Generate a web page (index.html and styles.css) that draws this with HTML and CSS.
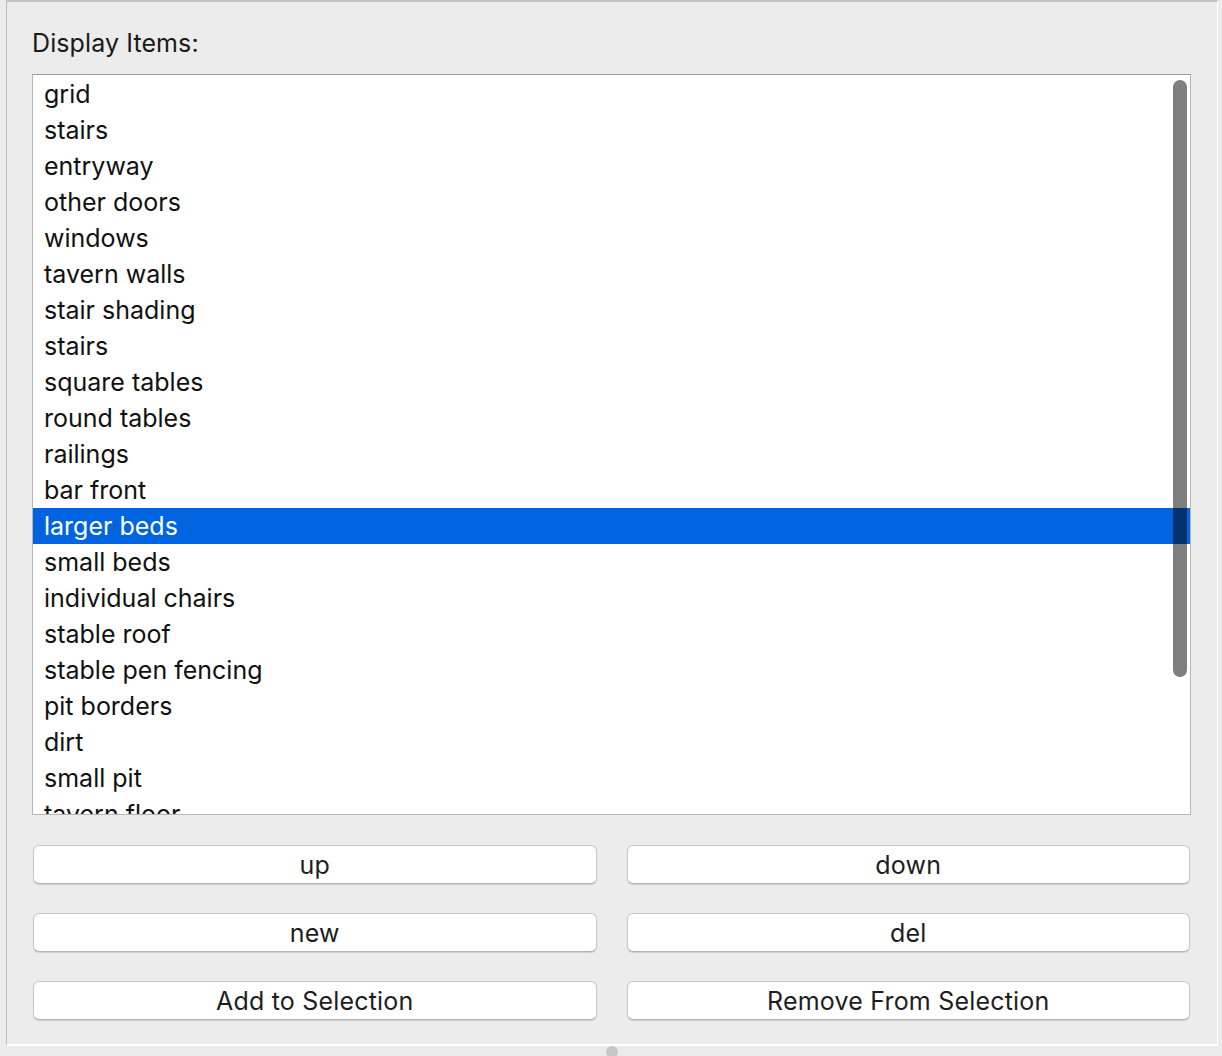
FILE: index.html
```html
<!DOCTYPE html>
<html>
<head>
<meta charset="utf-8">
<link rel="stylesheet" href="styles.css">
</head>
<body>
<div class="panel">
  <div class="title">Display Items:</div>
  <div class="list">
    <div class="row">grid</div>
    <div class="row">stairs</div>
    <div class="row">entryway</div>
    <div class="row">other doors</div>
    <div class="row">windows</div>
    <div class="row">tavern walls</div>
    <div class="row">stair shading</div>
    <div class="row">stairs</div>
    <div class="row">square tables</div>
    <div class="row">round tables</div>
    <div class="row">railings</div>
    <div class="row">bar front</div>
    <div class="row selected">larger beds</div>
    <div class="row">small beds</div>
    <div class="row">individual chairs</div>
    <div class="row">stable roof</div>
    <div class="row">stable pen fencing</div>
    <div class="row">pit borders</div>
    <div class="row">dirt</div>
    <div class="row">small pit</div>
    <div class="row">tavern floor</div>
    <div class="row">stable floor</div>
    <div class="thumb"></div>
  </div>
  <div class="buttons">
    <button class="btn">up</button>
    <button class="btn">down</button>
    <button class="btn">new</button>
    <button class="btn">del</button>
    <button class="btn">Add to Selection</button>
    <button class="btn">Remove From Selection</button>
  </div>
</div>
<div class="handle"></div>
</body>
</html>
```
FILE: styles.css
```css
html, body {
  margin: 0;
  padding: 0;
  background: #ececec;
  width: 1222px;
  height: 1056px;
  overflow: hidden;
  position: relative;
  font-family: Inter, "Noto Sans", "Liberation Sans", sans-serif;
}
.panel {
  box-sizing: border-box;
  margin-left: 6px;
  width: 1212px;
  height: 1046px;
  border-top: 2px solid #c2c2c2;
  border-left: 1px solid #bdbdbd;
  border-right: 1px solid #ffffff;
  border-bottom: 2px solid #ffffff;
  padding: 27px 26px 0 25px;
}
.title {
  font-size: 25px;
  line-height: 28px;
  color: #1a1a1a;
  height: 28px;
  margin-bottom: 17px;
  letter-spacing: 0.1px;
}
.list {
  position: relative;
  box-sizing: border-box;
  height: 741px;
  background: #ffffff;
  border: 1px solid #b5b5b5;
  border-top-color: #9d9d9d;
  padding-top: 1px;
  overflow: hidden;
}
.row {
  height: 36px;
  line-height: 36px;
  padding-left: 11px;
  font-size: 25px;
  color: #111111;
  white-space: nowrap;
}
.row.selected {
  background: #0064e1;
  color: #ffffff;
}
.thumb {
  position: absolute;
  top: 5px;
  right: 3px;
  width: 14px;
  height: 597px;
  border-radius: 7px;
  background: rgba(0, 0, 0, 0.5);
}
.buttons {
  display: grid;
  grid-template-columns: 1fr 1fr;
  column-gap: 30px;
  row-gap: 29px;
  margin: 30px 1px 0 1px;
}
.btn {
  box-sizing: border-box;
  height: 39px;
  background: #ffffff;
  border: 1px solid #c8c8c8;
  border-bottom-color: #b4b4b4;
  border-radius: 6px;
  box-shadow: 0 1px 1px rgba(0, 0, 0, 0.12);
  font-family: Inter, "Noto Sans", "Liberation Sans", sans-serif;
  font-size: 25px;
  letter-spacing: 0.2px;
  color: #1e1e1e;
  padding: 1px 0 0 0;
  line-height: 36px;
}
.handle {
  position: absolute;
  left: 606px;
  top: 1046px;
  width: 12px;
  height: 12px;
  border-radius: 50%;
  background: #c6c6c6;
}
```
